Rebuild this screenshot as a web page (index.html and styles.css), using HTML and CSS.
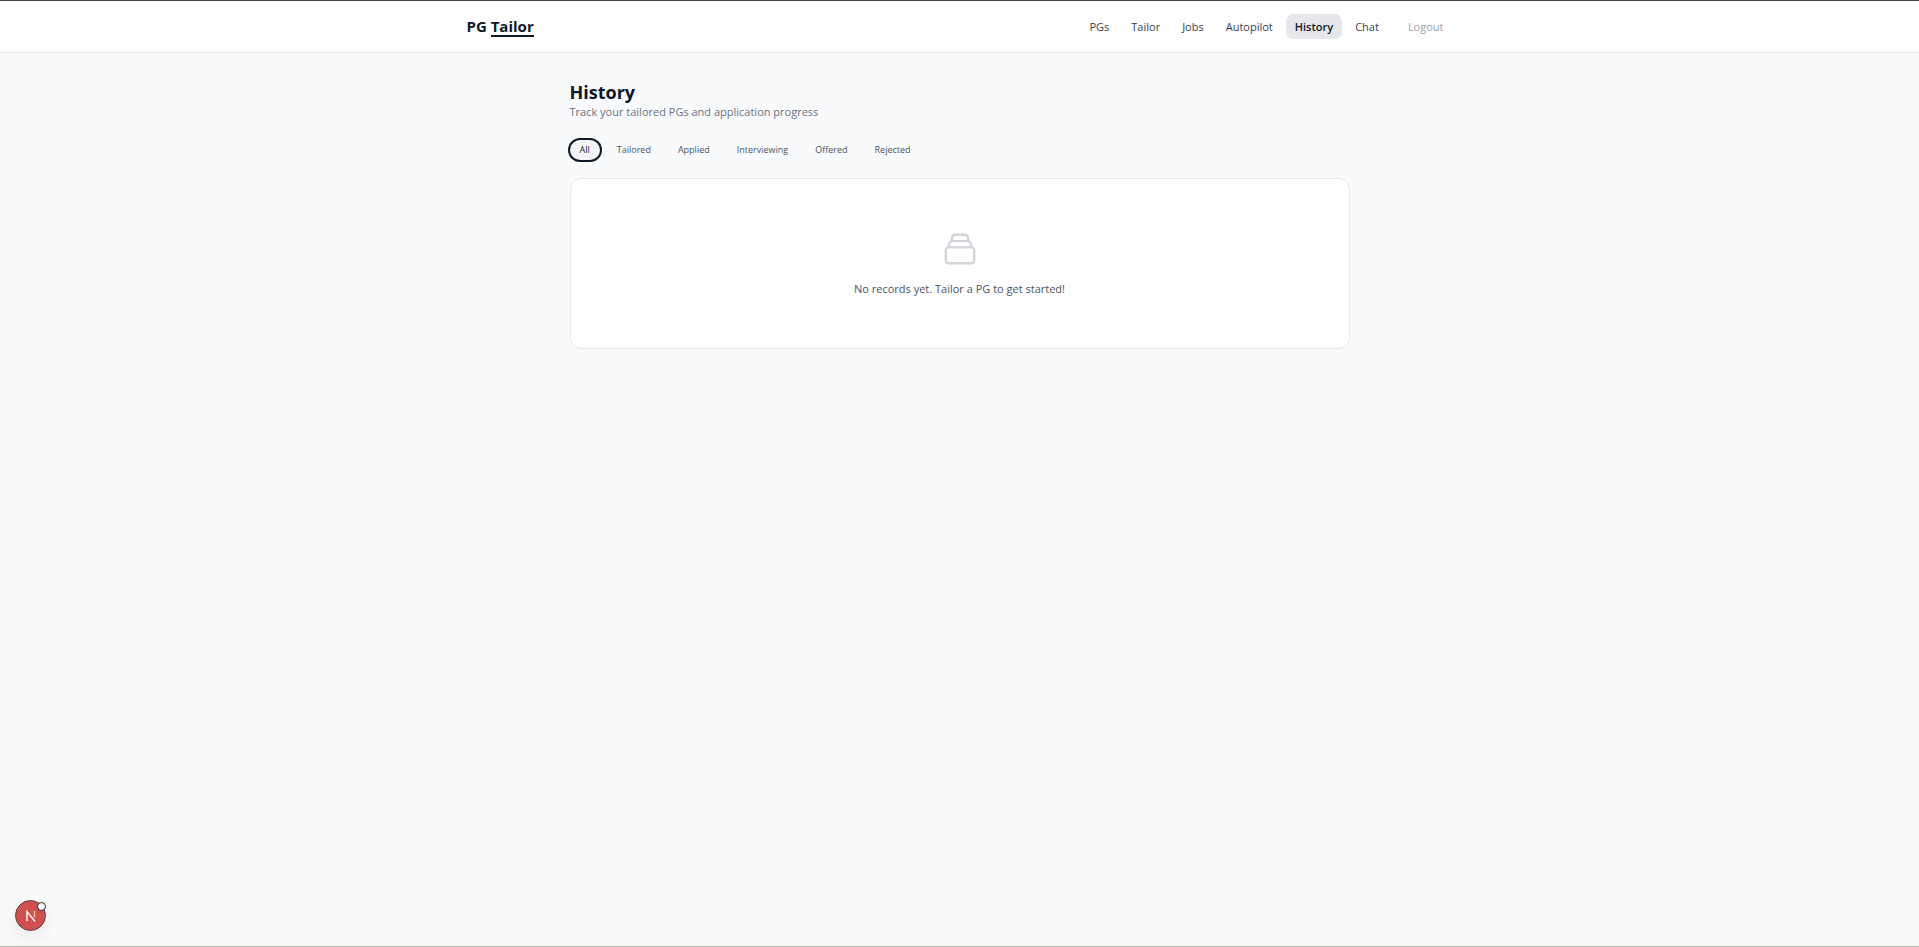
FILE: index.html
```html
<!DOCTYPE html>
<html lang="en">
  <head>
    <meta charset="UTF-8" />
    <meta name="viewport" content="width=device-width, initial-scale=1.0" />
    <title>PG Tailor - History</title>
    <link rel="stylesheet" href="styles.css">
  </head>

  <body>
    <header class="header">
      <div class="header-inner">
        <a class="logo" href="#">PG <span class="logo-accent">Tailor</span></a>
        <nav class="nav">
          <a class="nav-link" href="#">PGs</a>
          <a class="nav-link" href="#">Tailor</a>
          <a class="nav-link" href="#">Jobs</a>
          <a class="nav-link" href="#">Autopilot</a>
          <a class="nav-link active" href="#">History</a>
          <a class="nav-link" href="#">Chat</a>
          <button class="logout" type="button">Logout</button>
        </nav>
      </div>
    </header>

    <main class="container">
      <h1 class="title">History</h1>
      <p class="subtitle">Track your tailored PGs and application progress</p>

      <div class="filters">
        <button class="filter active" type="button">All</button>
        <button class="filter" type="button">Tailored</button>
        <button class="filter" type="button">Applied</button>
        <button class="filter" type="button">Interviewing</button>
        <button class="filter" type="button">Offered</button>
        <button class="filter" type="button">Rejected</button>
      </div>

      <div class="empty-state">
        <svg class="empty-state-icon" viewBox="0 0 24 24" fill="none" stroke="currentColor" stroke-width="1.5" stroke-linecap="round" stroke-linejoin="round" aria-hidden="true">
          <path d="M19 11H5m14 0a2 2 0 012 2v6a2 2 0 01-2 2H5a2 2 0 01-2-2v-6a2 2 0 012-2m14 0V9a2 2 0 00-2-2M5 11V9a2 2 0 012-2m0 0V5a2 2 0 012-2h6a2 2 0 012 2v2M7 7h10" />
        </svg>
        <p>No records yet. Tailor a PG to get started!</p>
      </div>
    </main>

    <button class="dev-badge" type="button" aria-label="Open dev tools">
      <svg class="dev-badge-icon" viewBox="0 0 12 12" fill="none" aria-hidden="true">
        <path d="M2 11V1.500L10 11.500" stroke="#fff" stroke-width="1.4" />
        <path d="M9.500 1V7.500" stroke="#f3cf9f" stroke-width="1.4" />
      </svg>
      <span class="dev-badge-dot"></span>
    </button>
  </body>
</html>
```

FILE: styles.css
```css
* {
  margin: 0;
  padding: 0;
  box-sizing: border-box;
}

body {
  font-family: 'Segoe UI', 'Open Sans', 'Noto Sans', sans-serif;
  font-size: 11px;
  line-height: 18px;
  background: #f9fafb;
  color: #111827;
  min-height: 100vh;
  border-top: 1px solid #444446;
  border-bottom: 1px solid #b5b0a8;
}

button {
  font-family: inherit;
  border: none;
  background: none;
  cursor: pointer;
}

.header {
  background: #fff;
  border-bottom: 1px solid #e5e7eb;
}

.header-inner {
  display: flex;
  align-items: center;
  justify-content: space-between;
  max-width: 1024px;
  height: 51px;
  margin: 0 auto;
  padding: 0 19px;
}

.logo {
  font-size: 15px;
  font-weight: 700;
  line-height: 18px;
  color: #0f172a;
  text-decoration: none;
}

.logo-accent {
  display: inline-block;
  border-bottom: 2px solid #0f172a;
}

.nav {
  display: flex;
  align-items: center;
  gap: 4px;
}

.nav-link,
.logout {
  font-size: 11px;
  font-weight: 500;
  line-height: 17px;
  padding: 4px 9px;
  border-radius: 7px;
  color: #374151;
  text-decoration: none;
}

.nav-link.active {
  background: #e5e7eb;
  color: #0f172a;
  font-weight: 600;
}

.logout {
  margin-left: 7px;
  color: #9ca3af;
}

.container {
  max-width: 812px;
  margin: 0 auto;
  padding: 27px 16px;
}

.title {
  font-size: 18px;
  font-weight: 700;
  line-height: 24px;
  color: #0f172a;
}

.subtitle {
  line-height: 16px;
  color: #6b7280;
}

.filters {
  display: flex;
  gap: 7px;
  margin: 20px 0 18px;
}

.filter {
  font-size: 9px;
  font-weight: 500;
  line-height: 14px;
  padding: 3px 10px;
  border-radius: 10px;
  color: #4b5563;
}

.filter.active {
  background: #f3f4f6;
  color: #1f2937;
  box-shadow: 0 0 0 2px #111827;
}

.empty-state {
  display: flex;
  flex-direction: column;
  align-items: center;
  gap: 12px;
  padding: 51px 20px 50px;
  background: #fff;
  border: 1px solid #e5e7eb;
  border-radius: 11px;
  color: #4b5563;
}

.empty-state-icon {
  width: 38px;
  height: 38px;
  color: #d1d5db;
}

.dev-badge {
  position: fixed;
  left: 15px;
  bottom: 16px;
  display: flex;
  align-items: center;
  justify-content: center;
  width: 31px;
  height: 31px;
  border: 1px solid #5c4446;
  border-radius: 50%;
  background: #d04f4f;
  box-shadow: 0 6px 16px rgba(0, 0, 0, 0.08);
}

.dev-badge-icon {
  width: 12px;
  height: 12px;
}

.dev-badge-dot {
  position: absolute;
  top: 1px;
  right: -1px;
  width: 9px;
  height: 9px;
  border: 1px solid #222;
  border-radius: 50%;
  background: #fff;
}
```
